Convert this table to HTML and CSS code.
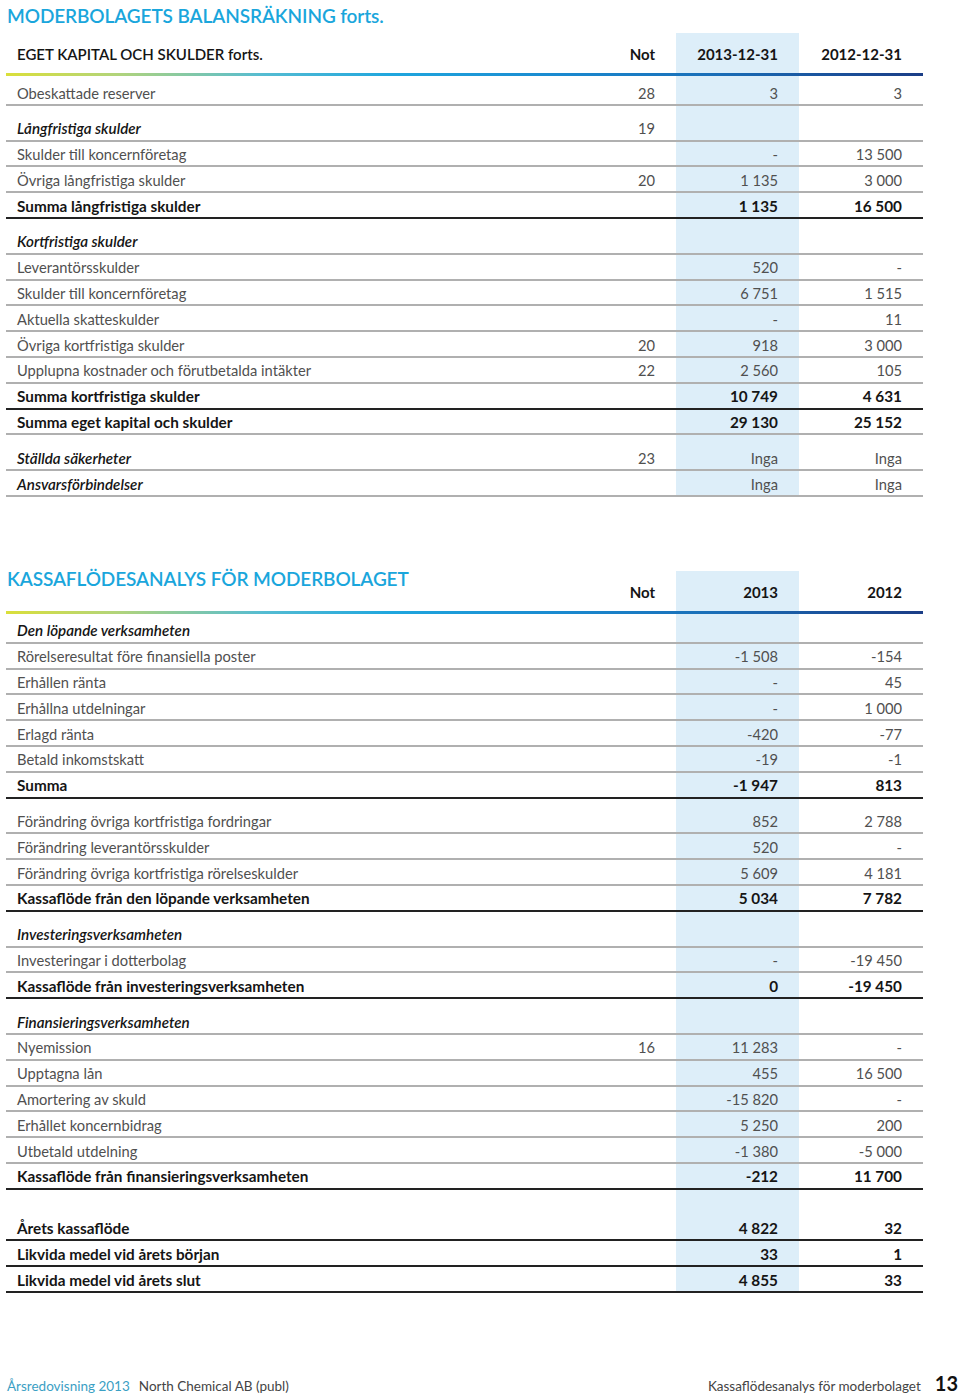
FILE: index.html
```html
<!DOCTYPE html>
<html lang="sv">
<head>
<meta charset="utf-8">
<title>Moderbolagets balansräkning</title>
<link rel="stylesheet" href="styles.css">
</head>
<body>
<div class="page">
  <h1 class="title">MODERBOLAGETS BALANSRÄKNING forts.</h1>
  <section class="tbl">
    <div class="row head"><div class="c lbl">EGET KAPITAL OCH SKULDER forts.</div><div class="c">Not</div><div class="c hl">2013-12-31</div><div class="c">2012-12-31</div></div>
    <div class="rule"></div>
    <div class="row first"><div class="c lbl">Obeskattade reserver</div><div class="c">28</div><div class="c hl">3</div><div class="c">3</div></div>
    <div class="row sp it"><div class="c lbl">Långfristiga skulder</div><div class="c">19</div><div class="c hl"></div><div class="c"></div></div>
    <div class="row"><div class="c lbl">Skulder till koncernföretag</div><div class="c"></div><div class="c hl">-</div><div class="c">13 500</div></div>
    <div class="row"><div class="c lbl">Övriga långfristiga skulder</div><div class="c">20</div><div class="c hl">1 135</div><div class="c">3 000</div></div>
    <div class="row b thick"><div class="c lbl">Summa långfristiga skulder</div><div class="c"></div><div class="c hl">1 135</div><div class="c">16 500</div></div>
    <div class="row sp it"><div class="c lbl">Kortfristiga skulder</div><div class="c"></div><div class="c hl"></div><div class="c"></div></div>
    <div class="row"><div class="c lbl">Leverantörsskulder</div><div class="c"></div><div class="c hl">520</div><div class="c">-</div></div>
    <div class="row"><div class="c lbl">Skulder till koncernföretag</div><div class="c"></div><div class="c hl">6 751</div><div class="c">1 515</div></div>
    <div class="row"><div class="c lbl">Aktuella skatteskulder</div><div class="c"></div><div class="c hl">-</div><div class="c">11</div></div>
    <div class="row"><div class="c lbl">Övriga kortfristiga skulder</div><div class="c">20</div><div class="c hl">918</div><div class="c">3 000</div></div>
    <div class="row"><div class="c lbl">Upplupna kostnader och förutbetalda intäkter</div><div class="c">22</div><div class="c hl">2 560</div><div class="c">105</div></div>
    <div class="row b thick"><div class="c lbl">Summa kortfristiga skulder</div><div class="c"></div><div class="c hl">10 749</div><div class="c">4 631</div></div>
    <div class="row b"><div class="c lbl">Summa eget kapital och skulder</div><div class="c"></div><div class="c hl">29 130</div><div class="c">25 152</div></div>
    <div class="row sp it"><div class="c lbl">Ställda säkerheter</div><div class="c">23</div><div class="c hl">Inga</div><div class="c">Inga</div></div>
    <div class="row it"><div class="c lbl">Ansvarsförbindelser</div><div class="c"></div><div class="c hl">Inga</div><div class="c">Inga</div></div>
  </section>

  <section class="tbl second">
    <div class="row head"><div class="c lbl ttl"><h2 class="title">KASSAFLÖDESANALYS FÖR MODERBOLAGET</h2></div><div class="c">Not</div><div class="c hl">2013</div><div class="c">2012</div></div>
    <div class="rule"></div>
    <div class="row first it"><div class="c lbl">Den löpande verksamheten</div><div class="c"></div><div class="c hl"></div><div class="c"></div></div>
    <div class="row"><div class="c lbl">Rörelseresultat före finansiella poster</div><div class="c"></div><div class="c hl">-1 508</div><div class="c">-154</div></div>
    <div class="row"><div class="c lbl">Erhållen ränta</div><div class="c"></div><div class="c hl">-</div><div class="c">45</div></div>
    <div class="row"><div class="c lbl">Erhållna utdelningar</div><div class="c"></div><div class="c hl">-</div><div class="c">1 000</div></div>
    <div class="row"><div class="c lbl">Erlagd ränta</div><div class="c"></div><div class="c hl">-420</div><div class="c">-77</div></div>
    <div class="row"><div class="c lbl">Betald inkomstskatt</div><div class="c"></div><div class="c hl">-19</div><div class="c">-1</div></div>
    <div class="row b thick"><div class="c lbl">Summa</div><div class="c"></div><div class="c hl">-1 947</div><div class="c">813</div></div>
    <div class="row sp"><div class="c lbl">Förändring övriga kortfristiga fordringar</div><div class="c"></div><div class="c hl">852</div><div class="c">2 788</div></div>
    <div class="row"><div class="c lbl">Förändring leverantörsskulder</div><div class="c"></div><div class="c hl">520</div><div class="c">-</div></div>
    <div class="row"><div class="c lbl">Förändring övriga kortfristiga rörelseskulder</div><div class="c"></div><div class="c hl">5 609</div><div class="c">4 181</div></div>
    <div class="row b thick"><div class="c lbl">Kassaflöde från den löpande verksamheten</div><div class="c"></div><div class="c hl">5 034</div><div class="c">7 782</div></div>
    <div class="row sp it"><div class="c lbl">Investeringsverksamheten</div><div class="c"></div><div class="c hl"></div><div class="c"></div></div>
    <div class="row"><div class="c lbl">Investeringar i dotterbolag</div><div class="c"></div><div class="c hl">-</div><div class="c">-19 450</div></div>
    <div class="row b thick"><div class="c lbl">Kassaflöde från investeringsverksamheten</div><div class="c"></div><div class="c hl">0</div><div class="c">-19 450</div></div>
    <div class="row sp it"><div class="c lbl">Finansieringsverksamheten</div><div class="c"></div><div class="c hl"></div><div class="c"></div></div>
    <div class="row"><div class="c lbl">Nyemission</div><div class="c">16</div><div class="c hl">11 283</div><div class="c">-</div></div>
    <div class="row"><div class="c lbl">Upptagna lån</div><div class="c"></div><div class="c hl">455</div><div class="c">16 500</div></div>
    <div class="row"><div class="c lbl">Amortering av skuld</div><div class="c"></div><div class="c hl">-15 820</div><div class="c">-</div></div>
    <div class="row"><div class="c lbl">Erhållet koncernbidrag</div><div class="c"></div><div class="c hl">5 250</div><div class="c">200</div></div>
    <div class="row"><div class="c lbl">Utbetald utdelning</div><div class="c"></div><div class="c hl">-1 380</div><div class="c">-5 000</div></div>
    <div class="row b thick"><div class="c lbl">Kassaflöde från finansieringsverksamheten</div><div class="c"></div><div class="c hl">-212</div><div class="c">11 700</div></div>
    <div class="row spl b thick"><div class="c lbl">Årets kassaflöde</div><div class="c"></div><div class="c hl">4 822</div><div class="c">32</div></div>
    <div class="row b thick"><div class="c lbl">Likvida medel vid årets början</div><div class="c"></div><div class="c hl">33</div><div class="c">1</div></div>
    <div class="row b thick"><div class="c lbl">Likvida medel vid årets slut</div><div class="c"></div><div class="c hl">4 855</div><div class="c">33</div></div>
  </section>

  <footer class="foot">
    <div class="foot-left"><span class="year">Årsredovisning 2013</span><span class="co">North Chemical AB (publ)</span></div>
    <div class="foot-right"><span class="sec">Kassaflödesanalys för moderbolaget</span><span class="num">13</span></div>
  </footer>
</div>
</body>
</html>
```

FILE: styles.css
```css
* { box-sizing: border-box; }
html, body { margin: 0; padding: 0; background: #fff; }
body {
  font-family: Lato, "Liberation Sans", sans-serif;
  color: #3a3a3a;
}
.page {
  width: 960px;
  min-height: 1397px;
  padding: 0 2px 1px 6px;
  display: flex;
  flex-direction: column;
}
.title {
  margin: 0;
  padding-left: 1px;
  height: 33px;
  line-height: 32px;
  font-size: 19px;
  font-weight: 600;
  color: #1aa6dc;
  letter-spacing: -0.1px;
}
.tbl {
  width: 917px;
  display: flex;
  flex-direction: column;
}
.tbl.second { margin-top: 74px; }
.row {
  display: grid;
  grid-template-columns: 1fr 76px 123px 124px;
  border-bottom: 2px solid #b0b0b0;
  font-size: 14.7px;
  font-weight: 400;
  color: #505050;
}
.c {
  line-height: 22.3px;
  padding-top: 1.5px;
  padding-right: 21px;
  text-align: right;
  white-space: nowrap;
}
.c.lbl { text-align: left; padding-left: 11px; padding-right: 0; }
.c.hl { background: #ddeef9; }
.row.first .c { padding-top: 5.5px; }
.row.sp .c { padding-top: 11.5px; }
.row.spl .c { padding-top: 27.5px; }
.row.b { font-weight: 700; color: #151515; font-size: 15.3px; }
.row.it .c.lbl { font-style: italic; font-weight: 600; color: #151515; font-size: 15.2px; }
.row.thick { border-bottom-color: #222; }
.row.head {
  border-bottom: none;
  height: 40px;
  font-weight: 700;
  font-size: 15px;
  color: #151515;
}
.row.head .c { line-height: 40px; padding-top: 1px; }
.row.head .c.lbl { font-weight: 600; }
.row.head .c.ttl { padding-left: 1px; padding-top: 0; line-height: normal; }
.row.head .ttl .title { height: auto; line-height: 16px; padding-left: 0; padding-top: 0; }
.rule {
  height: 3px;
  background: linear-gradient(90deg, #dadf3a 0%, #b2d47a 12%, #55bcd2 28%, #1fa6de 42%, #1a8ad0 60%, #1a6cb6 78%, #1b3d86 100%);
}
.foot {
  margin-top: auto;
  display: flex;
  justify-content: space-between;
  align-items: baseline;
  font-size: 13.5px;
  font-weight: 400;
  line-height: 20px;
  padding-left: 1px;
}
.foot-left .year { color: #3ba0c4; margin-right: 9px; }
.foot-left .co { color: #444; }
.foot-right { display: flex; align-items: baseline; }
.foot-right .sec { color: #444; }
.foot-right .num {
  margin-left: 14px;
  font-size: 20px;
  font-weight: 700;
  color: #111;
}
```
